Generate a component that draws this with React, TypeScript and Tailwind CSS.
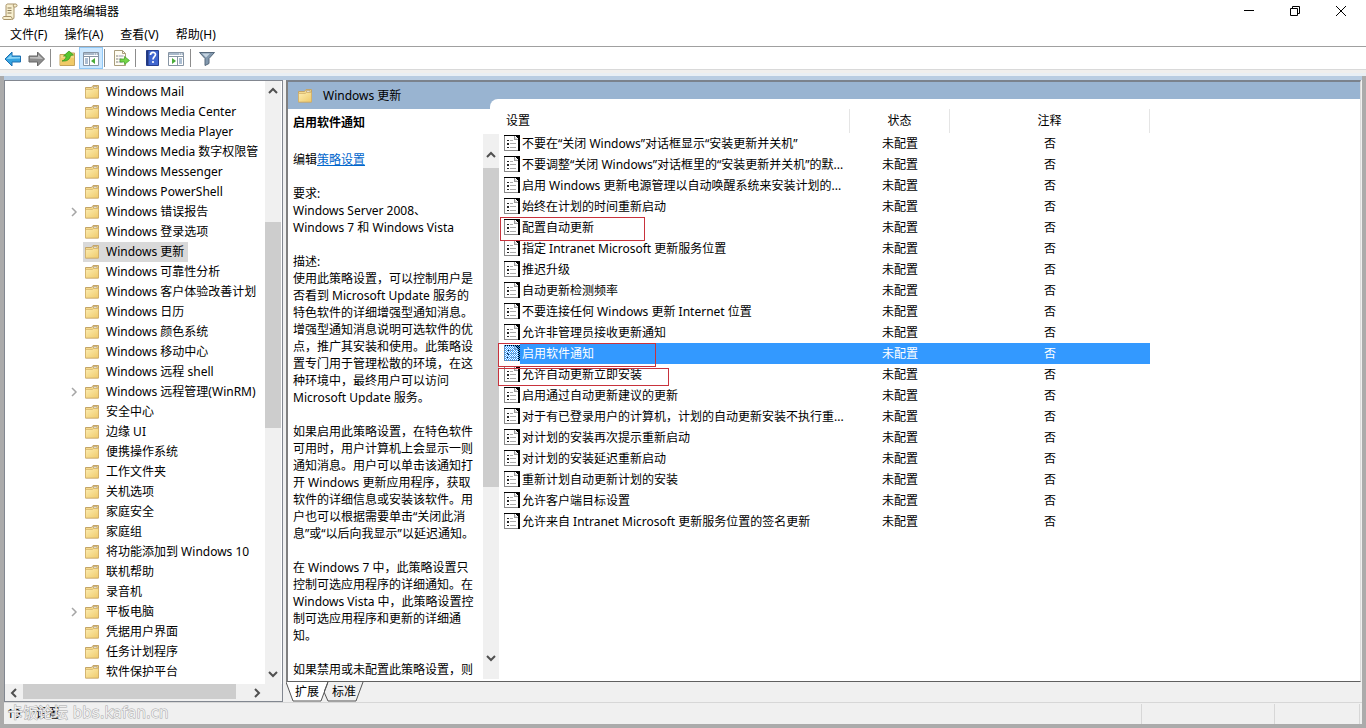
import type { ReactNode } from "react";
import clsx from "clsx";

type TreeItem = { name: string; expandable?: boolean; selected?: boolean };

const tree: TreeItem[] = [
  { name: "Windows Mail" },
  { name: "Windows Media Center" },
  { name: "Windows Media Player" },
  { name: "Windows Media 数字权限管" },
  { name: "Windows Messenger" },
  { name: "Windows PowerShell" },
  { name: "Windows 错误报告", expandable: true },
  { name: "Windows 登录选项" },
  { name: "Windows 更新", selected: true },
  { name: "Windows 可靠性分析" },
  { name: "Windows 客户体验改善计划" },
  { name: "Windows 日历" },
  { name: "Windows 颜色系统" },
  { name: "Windows 移动中心" },
  { name: "Windows 远程 shell" },
  { name: "Windows 远程管理(WinRM)", expandable: true },
  { name: "安全中心" },
  { name: "边缘 UI" },
  { name: "便携操作系统" },
  { name: "工作文件夹" },
  { name: "关机选项" },
  { name: "家庭安全" },
  { name: "家庭组" },
  { name: "将功能添加到 Windows 10" },
  { name: "联机帮助" },
  { name: "录音机" },
  { name: "平板电脑", expandable: true },
  { name: "凭据用户界面" },
  { name: "任务计划程序" },
  { name: "软件保护平台" },
];

// mark = red annotation box drawn over the row
const policies: { name: string; mark?: string; selected?: boolean }[] = [
  { name: "不要在“关闭 Windows”对话框显示“安装更新并关机”" },
  { name: "不要调整“关闭 Windows”对话框里的“安装更新并关机”的默..." },
  { name: "启用 Windows 更新电源管理以自动唤醒系统来安装计划的..." },
  { name: "始终在计划的时间重新启动" },
  { name: "配置自动更新", mark: "-left-1 top-0 w-[145px] h-6" },
  { name: "指定 Intranet Microsoft 更新服务位置" },
  { name: "推迟升级" },
  { name: "自动更新检测频率" },
  { name: "不要连接任何 Windows 更新 Internet 位置" },
  { name: "允许非管理员接收更新通知" },
  { name: "启用软件通知", selected: true, mark: "-left-1.5 top-0 w-[158px] h-6" },
  { name: "允许自动更新立即安装", mark: "-left-1.5 top-1 w-[171px] h-[18px]" },
  { name: "启用通过自动更新建议的更新" },
  { name: "对于有已登录用户的计算机，计划的自动更新安装不执行重..." },
  { name: "对计划的安装再次提示重新启动" },
  { name: "对计划的安装延迟重新启动" },
  { name: "重新计划自动更新计划的安装" },
  { name: "允许客户端目标设置" },
  { name: "允许来自 Intranet Microsoft 更新服务位置的签名更新" },
];

const requirement = `要求:
Windows Server 2008、
Windows 7 和 Windows Vista`;

const description = `描述:
使用此策略设置，可以控制用户是
否看到 Microsoft Update 服务的
特色软件的详细增强型通知消息。
增强型通知消息说明可选软件的优
点，推广其安装和使用。此策略设
置专门用于管理松散的环境，在这
种环境中，最终用户可以访问
Microsoft Update 服务。

如果启用此策略设置，在特色软件
可用时，用户计算机上会显示一则
通知消息。用户可以单击该通知打
开 Windows 更新应用程序，获取
软件的详细信息或安装该软件。用
户也可以根据需要单击“关闭此消
息”或“以后向我显示”以延迟通知。

在 Windows 7 中，此策略设置只
控制可选应用程序的详细通知。在
Windows Vista 中，此策略设置控
制可选应用程序和更新的详细通
知。

如果禁用或未配置此策略设置，则`;

function FolderIcon() {
  return (
    <svg width="16" height="16" viewBox="0 0 16 16" className="shrink-0">
      <defs>
        <linearGradient id="folder" x1="0" y1="0" x2="1" y2="1">
          <stop offset="0" stopColor="#fdeeb2" />
          <stop offset="1" stopColor="#efca6a" />
        </linearGradient>
      </defs>
      <path d="M1.5 3.5h6l1.500-2h5.500v12.500h-13z" fill="#f3d98c" stroke="#c4a467" />
      <path d="M9.500 2.500h3.500v1.500h-3.500z" fill="#fff" stroke="#a89060" strokeWidth=".6" />
      <path d="M1.500 5.500h6.800l1.200-1h5v9.500h-13z" fill="url(#folder)" stroke="#d0ae68" strokeWidth=".7" />
    </svg>
  );
}

function PolicyIcon({ selected }: { selected?: boolean }) {
  return (
    <svg width="16" height="17" viewBox="0 0 16 17" shapeRendering="crispEdges" className="shrink-0">
      <path d="M0 0h16v16H0z" fill="#000" />
      <path d="M0 1h11l3 3v12H0z" fill="#fff" />
      <path d="M0 1h1v15H0zM0 15h14v1H0z" fill="#888" />
      <path d="M10 1h1v3h3v1h-4z" fill="#999" />
      <path d="M11 2h1v1h1v1h-2z" fill="#ddd" />
      <path d="M3 5h2v1H3zM3 8h2v2H3zM3 12h2v1H3z" fill="#222" />
      <path d="M6 5h3v1H6zM6 8h6v1H6zM6 12h6v1H6z" fill="#aaa" />
      {selected && (
        <>
          <defs>
            <pattern id="dither" width="2" height="2" patternUnits="userSpaceOnUse">
              <path d="M0 0h1v1H0zM1 1h1v1H1z" fill="#3399ff" />
            </pattern>
          </defs>
          <path d="M0 0h16v16H0z" fill="url(#dither)" />
        </>
      )}
    </svg>
  );
}

function ScrollArrow({ dir, label }: { dir: "up" | "down" | "left" | "right"; label: string }) {
  const d = {
    up: "M1 7l4-4 4 4",
    down: "M1 3l4 4 4-4",
    left: "M7 1L3 5l4 4",
    right: "M3 1l4 4-4 4",
  }[dir];
  return (
    <button aria-label={label} className="flex size-full items-center justify-center">
      <svg width="10" height="10" viewBox="0 0 10 10">
        <path d={d} fill="none" stroke="#505050" strokeWidth="2" />
      </svg>
    </button>
  );
}

function ToolButton({ label, active, children }: { label: string; active?: boolean; children: ReactNode }) {
  return (
    <button
      aria-label={label}
      className={clsx(
        "flex h-[22px] w-6 items-center justify-center border",
        active ? "border-[#90c8f6] bg-[#cce8ff]" : "border-transparent"
      )}
    >
      <svg width="18" height="18" viewBox="0 0 18 18" className="shrink-0">
        {children}
      </svg>
    </button>
  );
}

function Separator() {
  return <div className="h-[18px] w-px shrink-0 bg-[#8c8c8c]" />;
}

function ConsoleWindow() {
  return (
    <>
      <path d="M1.5 3.5h15v13h-15z" fill="#fff" stroke="#8795a4" />
      <path d="M2 4h14v2H2z" fill="#a9b9ca" />
      <path d="M12 5h1M14 5h1" stroke="#fff" />
      <path d="M2 7.5h14" stroke="#8795a4" />
    </>
  );
}

function Toolbar() {
  return (
    <div className="flex h-[23px] shrink-0 items-center border-b border-[#d9d9d9] px-px">
      <ToolButton label="后退">
        <path d="M1 10l7-7v4h8.500v6H8v4z" fill="#35a3e0" stroke="#1c6fb0" />
        <path d="M2.500 10l5-4.500V8H16v1.500z" fill="#8ad4f6" />
      </ToolButton>
      <ToolButton label="前进">
        <path d="M16.500 10l-7-7v4H1v6h8.500v4z" fill="#8d8d8d" stroke="#666" />
        <path d="M15 10l-5-4.500V8H2v1.500z" fill="#bdbdbd" />
      </ToolButton>
      <div className="w-px" />
      <Separator />
      <div className="w-1" />
      <ToolButton label="上移一级">
        <path d="M2 5.500h6l1-1.500h7.500v12.500H2z" fill="#f5d986" stroke="#c5a35a" />
        <path d="M2.500 9H16v7H2.500z" fill="#f0ca68" />
        <path d="M4 12c3-1 4-3 4-5H5.500l5.500-5 4.500 4-3 .5c-.5 4-3.500 6-8.500 5.500z" fill="#55c52e" stroke="#31941b" strokeWidth=".7" />
      </ToolButton>
      <ToolButton label="显示/隐藏控制台树" active>
        <ConsoleWindow />
        <path d="M3 10h3M3 12h3M3 14h3" stroke="#5b7fa6" />
        <path d="M7.500 8v8" stroke="#8795a4" />
        <path d="M13 9v6l-4-3z" fill="#49ac38" />
      </ToolButton>
      <div className="w-px" />
      <Separator />
      <div className="w-1" />
      <ToolButton label="导出列表">
        <path d="M2.500 1.500h8l3 3v12h-11z" fill="#fffdf2" stroke="#a99d7c" />
        <path d="M10.500 1.500v3h3" fill="none" stroke="#a99d7c" />
        <path d="M4.500 7h1M4.500 10h1M4.500 13h1" stroke="#555" strokeWidth="1.300" />
        <path d="M6.500 7h5M6.500 10h3M6.500 13h4" stroke="#9993b5" />
        <path d="M8 10h4.500V7.500l5 4-5 4V13H8z" fill="#74d548" stroke="#3d9d24" strokeWidth=".7" />
      </ToolButton>
      <div className="w-0.5" />
      <Separator />
      <div className="w-1" />
      <ToolButton label="帮助">
        <path d="M3.500 1.500h12v15h-12z" fill="#4066cf" stroke="#263f91" />
        <path d="M4.500 2v14" stroke="#23397d" strokeWidth="2" />
        <path d="M7.500 6c0-3.500 5-3.300 5-.4 0 2-2.500 2.200-2.500 4.900" fill="none" stroke="#fff" strokeWidth="1.700" />
        <circle cx="10" cy="13" r="1.100" fill="#fff" />
      </ToolButton>
      <ToolButton label="显示/隐藏操作窗格">
        <ConsoleWindow />
        <path d="M12 10h3M12 12h3M12 14h3" stroke="#5b7fa6" />
        <path d="M10.500 8v8" stroke="#8795a4" />
        <path d="M5 9v6l4-3z" fill="#49ac38" />
      </ToolButton>
      <div className="w-0.5" />
      <Separator />
      <div className="w-1" />
      <ToolButton label="筛选器">
        <path d="M1.500 3.500h15L11 9.500v5l-4 2v-7z" fill="#8298ae" stroke="#56697c" />
        <path d="M4 4.500h8l-4 4z" fill="#c4d3e0" />
      </ToolButton>
    </div>
  );
}

function TreePane() {
  return (
    <div className="flex w-[279px] shrink-0 flex-col border border-[#828790] bg-white">
      <div className="flex min-h-0 flex-1">
        <ul className="min-w-0 flex-1 overflow-hidden pt-px">
          {tree.map((item) => (
            <li key={item.name} className="flex h-5 items-center pl-[63px] whitespace-nowrap">
              <span className="flex w-[15px] shrink-0">
                {item.expandable && (
                  <svg width="10" height="10" viewBox="0 0 10 10">
                    <path d="M4 1l4 4-4 4" fill="none" stroke="#a6a6a6" strokeWidth="1.500" />
                  </svg>
                )}
              </span>
              <span className={clsx("flex h-5 items-center gap-1.5 pr-1 pl-px", item.selected && "bg-[#d9d9d9]")}>
                <FolderIcon />
                {item.name}
              </span>
            </li>
          ))}
        </ul>
        <div className="mr-px flex w-4 shrink-0 flex-col bg-[#f0f0f0]">
          <div className="h-5">
            <ScrollArrow dir="up" label="向上滚动" />
          </div>
          <div className="flex-[121]" />
          <div className="flex-[205] bg-[#cdcdcd]" />
          <div className="flex-[236]" />
          <div className="h-5">
            <ScrollArrow dir="down" label="向下滚动" />
          </div>
        </div>
      </div>
      <div className="flex h-[17px] shrink-0 bg-[#f0f0f0] pr-4">
        <div className="w-[18px]">
          <ScrollArrow dir="left" label="向左滚动" />
        </div>
        <div className="mb-0.5 flex-[212] bg-[#cdcdcd]" />
        <div className="flex-[12]" />
        <div className="w-[18px]">
          <ScrollArrow dir="right" label="向右滚动" />
        </div>
      </div>
    </div>
  );
}

function DescriptionPane() {
  return (
    <div className="flex w-[211px] shrink-0 overflow-hidden">
      <div className="w-[195px] shrink-0 overflow-hidden pt-[5px] pl-[5px] leading-[17px] whitespace-pre">
        <h2 className="font-bold">启用软件通知</h2>
        <p className="mt-5">
          编辑
          <a href="#edit" className="text-[#0066cc] underline">
            策略设置
          </a>
        </p>
        <p className="mt-[17px]">{requirement}</p>
        <p className="mt-[17px]">{description}</p>
      </div>
      <div className="mt-[25px] mb-0.5 flex w-4 flex-col bg-[#f0f0f0]">
        <div className="flex h-[34px] pt-2">
          <ScrollArrow dir="up" label="说明向上滚动" />
        </div>
        <div className="flex-[319] bg-[#cdcdcd]" />
        <div className="flex-[158]" />
        <div className="flex h-[34px] pb-2">
          <ScrollArrow dir="down" label="说明向下滚动" />
        </div>
      </div>
    </div>
  );
}

function PolicyTable() {
  return (
    <div className="min-w-0 flex-1 pl-[5px]">
      <table className="w-[646px] table-fixed border-separate border-spacing-0 whitespace-nowrap">
        <thead>
          <tr className="h-6">
            <th className="w-[346px] border-r border-[#e5e5e5] p-0 pl-0.5 text-left font-normal">设置</th>
            <th className="w-[100px] border-r border-[#e5e5e5] p-0 font-normal">状态</th>
            <th className="w-[200px] border-r border-[#e5e5e5] p-0 font-normal">注释</th>
          </tr>
        </thead>
        <tbody>
          {policies.map((policy) => (
            <tr key={policy.name} className={clsx("h-[21px]", policy.selected && "text-white")}>
              <td className="relative p-0">
                <div className="flex h-[21px] items-center">
                  <PolicyIcon selected={policy.selected} />
                  <span className={clsx("flex h-full min-w-0 flex-1 items-center pl-0.5", policy.selected && "bg-[#3399ff]")}>
                    {policy.name}
                  </span>
                </div>
                {policy.mark && <span className={clsx("absolute z-10 border border-[#c8323c]", policy.mark)} />}
              </td>
              <td className={clsx("p-0 text-center", policy.selected && "bg-[#3399ff]")}>未配置</td>
              <td className={clsx("p-0 text-center", policy.selected && "bg-[#3399ff]")}>否</td>
            </tr>
          ))}
        </tbody>
      </table>
    </div>
  );
}

function ViewTabs() {
  return (
    <div className="flex h-5 shrink-0 bg-[#f0f0f0]">
      <button className="relative h-5 w-[42px]">
        <svg width="42" height="20" viewBox="0 0 42 20" className="absolute inset-0">
          <path d="M0 0l7 19h28l7-19" fill="#fff" stroke="#555" />
        </svg>
        <span className="relative">扩展</span>
      </button>
      <button className="relative -ml-1 h-5 w-10">
        <svg width="40" height="20" viewBox="0 0 40 20" className="absolute inset-0">
          <path d="M4 0L0 10l4 9h28l7-19" fill="none" stroke="#555" />
        </svg>
        <span className="relative">标准</span>
      </button>
    </div>
  );
}

function ResultPane() {
  return (
    <div className="flex min-w-0 flex-1 flex-col">
      <div className="flex min-h-0 flex-1 flex-col border-t-2 border-r border-b border-l-2 border-t-[#7b828c] border-r-[#dcdcdc] border-b-[#606060] border-l-[#808080] bg-white">
        <div className="flex h-[27px] shrink-0 items-center bg-[#99b4d1]">
          <div className="flex w-[202px] shrink-0 items-center gap-2.5 pl-[9px]">
            <FolderIcon />
            Windows 更新
          </div>
          <div className="h-2.5 flex-1 self-end rounded-tl-lg bg-white" />
        </div>
        <div className="flex min-h-0 flex-1">
          <DescriptionPane />
          <PolicyTable />
        </div>
      </div>
      <ViewTabs />
    </div>
  );
}

export default function App() {
  return (
    <div className="flex h-screen flex-col overflow-hidden bg-white font-['Noto_Sans','Noto_Sans_CJK_SC',sans-serif] text-xs text-black">
      {/* Title bar */}
      <header className="flex h-6 shrink-0 items-center pr-0.5 pl-0.5">
        <svg width="16" height="18" viewBox="0 0 16 18">
          <path d="M4 2.500C4 1 6 .8 7 1h7c1.500.5 1.500 3-.5 3H12v10c0 2-1 2.500-2.500 2.500H2c-2-.5-1.500-3 0-3h2z" fill="#f8efcf" stroke="#a8946a" />
          <path d="M2 13.500h7c1 0 .5 3 2 2.500M12 4c-1 0-1-2 0-3" fill="none" stroke="#a8946a" />
          <path d="M5.500 5h4M5.500 7.500h4M5.500 10h4" stroke="#8b7b57" />
        </svg>
        <h1 className="ml-[5px] flex-1">本地组策略编辑器</h1>
        <div className="flex h-[22px] self-start">
          <button aria-label="最小化" className="flex w-[46px] items-center justify-center">
            <svg width="10" height="10" viewBox="0 0 10 10">
              <path d="M0 4.500h10" stroke="#000" />
            </svg>
          </button>
          <button aria-label="还原" className="flex w-[46px] items-center justify-center">
            <svg width="10" height="10" viewBox="0 0 10 10">
              <path d="M.5 2.500h7v7h-7zM2.500 2.500v-2h7v7h-2" fill="none" stroke="#000" />
            </svg>
          </button>
          <button aria-label="关闭" className="flex w-[46px] items-center justify-center">
            <svg width="10" height="10" viewBox="0 0 10 10">
              <path d="M0 0l10 10M10 0L0 10" stroke="#000" />
            </svg>
          </button>
        </div>
      </header>

      {/* Menu */}
      <nav className="flex h-[23px] shrink-0 items-center gap-[17px] border-b border-[#a0a0a0] pl-2.5">
        <button>文件(F)</button>
        <button>操作(A)</button>
        <button>查看(V)</button>
        <button>帮助(H)</button>
      </nav>

      <Toolbar />
      <div className="h-1.5 shrink-0 border-b-[3px] border-[#e9eff4] bg-[#f0efed]" />

      {/* Console */}
      <main className="flex min-h-0 flex-1 flex-col border-x-4 border-b-4 border-[#ababab] bg-[#f0f0f0]">
        <div className="h-1 shrink-0 bg-[#b9cde2]" />
        <div className="flex min-h-0 flex-1 gap-[3px] pr-px">
          <TreePane />
          <ResultPane />
        </div>
        <footer className="relative flex h-[22px] shrink-0 items-center border-t border-[#d7d7d7] pr-0.5 pl-[3px]">
          <span className="flex-1">19 个设置</span>
          <div className="h-5 w-[133px] border-l border-[#d7d7d7]" />
          <div className="h-5 w-[86px] border-x border-[#d7d7d7]" />
          <span className="absolute top-0 left-1 font-['DejaVu_Sans','Noto_Sans_CJK_SC',sans-serif] text-[15px] leading-5 whitespace-nowrap text-[#f0f0f0] [-webkit-text-stroke:1px_#a8a8a8] [paint-order:stroke_fill]">
            卡饭论坛 bbs.kafan.cn
          </span>
        </footer>
      </main>
    </div>
  );
}
